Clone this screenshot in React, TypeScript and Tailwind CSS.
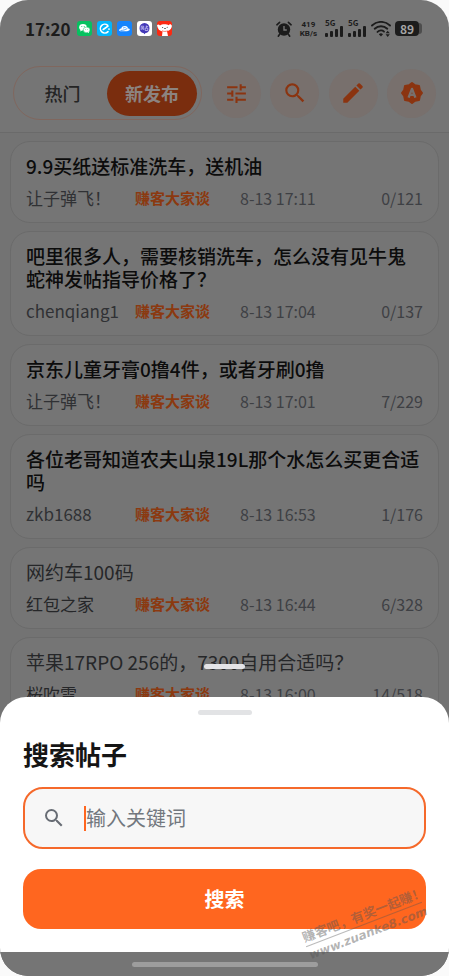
import { useState } from 'react';
import { MdTune, MdSearch, MdEdit } from 'react-icons/md';

type Post = {
  title: string;
  author: string;
  time: string;
  count: string;
  read?: boolean;
};

const posts: Post[] = [
  { title: '9.9买纸送标准洗车，送机油', author: '让子弹飞！', time: '8-13 17:11', count: '0/121' },
  { title: '吧里很多人，需要核销洗车，怎么没有见牛鬼蛇神发帖指导价格了？', author: 'chenqiang1', time: '8-13 17:04', count: '0/137' },
  { title: '京东儿童牙膏0撸4件，或者牙刷0撸', author: '让子弹飞！', time: '8-13 17:01', count: '7/229' },
  { title: '各位老哥知道农夫山泉19L那个水怎么买更合适吗', author: 'zkb1688', time: '8-13 16:53', count: '1/176' },
  { title: '网约车100码', author: '红包之家', time: '8-13 16:44', count: '6/328', read: true },
  { title: '苹果17RPO 256的，7300自用合适吗？', author: '桜吹雪', time: '8-13 16:00', count: '14/518', read: true },
];

function WechatIcon() {
  return (
    <svg viewBox="0 0 15 15" className="size-[15px]" aria-hidden="true">
      <rect width="15" height="15" rx="3" fill="#07c160" />
      <ellipse cx="6" cy="6.3" rx="3.8" ry="3.2" fill="#fff" />
      <path d="M3.6 8.4 3.2 10.4 5.4 9.2Z" fill="#fff" />
      <ellipse cx="9.6" cy="8.9" rx="3.4" ry="2.8" fill="#fff" stroke="#07c160" strokeWidth=".5" />
      <path d="M10.8 11 12 12.2 12 10.2Z" fill="#fff" />
      <g fill="#07c160">
        <circle cx="4.8" cy="5.5" r=".5" />
        <circle cx="7.2" cy="5.5" r=".5" />
        <circle cx="8.5" cy="8.3" r=".4" />
        <circle cx="10.6" cy="8.3" r=".4" />
      </g>
    </svg>
  );
}

function EleIcon() {
  return (
    <svg viewBox="0 0 15 15" className="size-[15px]" aria-hidden="true">
      <rect width="15" height="15" rx="3" fill="#02b6fd" />
      <path d="M10.7 4.3A4.4 4.4 0 1 0 11 10.6M6.2 8.5 11 5.2" fill="none" stroke="#fff" strokeWidth="1.6" strokeLinecap="round" />
      <circle cx="12" cy="8.1" r=".9" fill="#fff" />
    </svg>
  );
}

function CloudIcon() {
  return (
    <svg viewBox="0 0 15 15" className="size-[15px]" aria-hidden="true">
      <rect width="15" height="15" rx="3" fill="#1684fc" />
      <path d="M2 9.6C2.2 8 3.4 7.5 4.3 7.5 4.7 5.8 6.3 5 8 5.1c2 .1 2.9 1.2 3 2.4 1 0 1.8.4 1.8 1 0 1-2 1.8-4.400 1.800H3.300Z" fill="#fff" />
      <path d="M3.500 9.500C6 9.500 8.500 8.700 10.300 7.500M6 7.200C6.700 6.500 7.800 6.400 8.600 6.700" fill="none" stroke="#1684fc" strokeWidth=".7" />
    </svg>
  );
}

function TieIcon() {
  return (
    <svg viewBox="0 0 15 15" className="size-[15px]" aria-hidden="true">
      <rect width="15" height="15" rx="3" fill="#fff" />
      <path d="M7.500 2A5 5 0 0 1 12.500 7.200C12.500 10 10.500 11.800 8.500 12.100L7.500 13.200 6.500 12.100C4.500 11.800 2.500 10 2.500 7.200A5 5 0 0 1 7.500 2Z" fill="#4338b8" />
      <path d="M4.200 9V5.200H6.700V9M5.450 6V8.400M9.300 4.500V7M9.300 5.600H11.200M8.200 7.200H10.800V9.500H8.200Z" fill="none" stroke="#d9d4fa" strokeWidth=".7" />
    </svg>
  );
}

function JdIcon() {
  return (
    <svg viewBox="0 0 15 15" className="size-[15px]" aria-hidden="true">
      <rect width="15" height="15" rx="3" fill="#fb2a12" />
      <path d="M0 4.500C.5 3 2 3 3 4.500 4.500 3 9.500 2.800 11.700 4.200 12.500 2.800 14.500 3.200 14.900 5 14.500 7.500 13.300 8.700 12 9.500L10 10.300 11 15H5L5.500 10.500C2.500 10 .8 8 0 4.500Z" fill="#fff" />
      <path d="M5 9.700C6.700 10.700 9 10.700 10.700 9.700" fill="none" stroke="#fb2a12" strokeWidth=".6" />
      <circle cx="5.700" cy="6.500" r=".5" fill="#222" />
      <circle cx="10.200" cy="6.300" r=".5" fill="#222" />
      <ellipse cx="8" cy="7.600" rx=".8" ry=".5" fill="#222" />
    </svg>
  );
}

function AlarmIcon() {
  return (
    <svg viewBox="0 0 16 16" className="size-4" aria-hidden="true">
      <circle cx="8" cy="8.500" r="6.200" fill="#1c1c1c" />
      <path d="M.9 3.800 3.600 1.300M15.100 3.800 12.400 1.300M3.800 13 2.300 15.200M12.200 13 13.700 15.200" stroke="#1c1c1c" strokeWidth="1.600" strokeLinecap="round" />
      <path d="M8 5V9H10.800" fill="none" stroke="#757575" strokeWidth="1.400" />
    </svg>
  );
}

function Signal() {
  return (
    <div className="flex flex-col">
      <span className="text-[8px] leading-[6px] font-bold">5G</span>
      <svg viewBox="0 0 18 11" className="h-[11px] w-[18px]" aria-hidden="true">
        <g fill="#1c1c1c">
          <rect x="0" y="7" width="3" height="4" rx="1" />
          <rect x="5" y="5" width="3" height="6" rx="1" />
          <rect x="10" y="3" width="3" height="8" rx="1" />
          <rect x="15" y="0" width="3" height="11" rx="1" />
        </g>
      </svg>
    </div>
  );
}

function WifiIcon() {
  return (
    <svg viewBox="0 0 20 16" className="h-4 w-5" aria-hidden="true">
      <g fill="none" stroke="#1c1c1c" strokeWidth="1.900" strokeLinecap="round">
        <path d="M1 4.500C6-.3 14-.3 19 4.500" />
        <path d="M3.700 7.700C7.300 4.400 12.700 4.400 16.300 7.700" />
        <path d="M6.500 10.900C8.600 9.100 11.400 9.100 13 10.600" />
      </g>
      <path d="M7.800 13.200Q10 11.400 12 13.200L10 15.500Z" fill="#1c1c1c" />
      <path d="M14.600 12.300 16.700 9.700 18.800 12.300ZM14.600 13.300 16.700 15.900 18.800 13.300Z" fill="#1c1c1c" />
    </svg>
  );
}

function BadgeAIcon() {
  return (
    <svg viewBox="0 0 24 24" className="size-6" aria-hidden="true">
      <path
        d="M12 2 15 4.200 19 5 19.800 9 22 12 19.800 15 19 19 15 19.800 12 22 9 19.800 5 19 4.200 15 2 12 4.200 9 5 5 9 4.200Z"
        fill="#8b3410"
        stroke="#8b3410"
        strokeWidth="2"
        strokeLinejoin="round"
      />
      <path d="M8.600 16.600 12 7.900 15.400 16.600M9.900 13.900H14.100" fill="none" stroke="#78706d" strokeWidth="2.400" strokeLinejoin="round" />
    </svg>
  );
}

function StatusBar() {
  return (
    <div className="flex h-[57px] items-center pr-[27px] pl-[25px] text-[#1c1c1c]">
      <span className="text-[17px] leading-none font-semibold">17:20</span>
      <div className="ml-[6px] flex gap-[5px]">
        <WechatIcon />
        <EleIcon />
        <CloudIcon />
        <TieIcon />
        <JdIcon />
      </div>
      <div className="ml-auto flex items-center">
        <AlarmIcon />
        <div className="ml-2 text-center font-[Roboto,sans-serif] text-[8px] leading-[9px] font-bold">
          <div>419</div>
          <div>KB/s</div>
        </div>
        <div className="ml-2 flex gap-[5px]">
          <Signal />
          <Signal />
        </div>
        <div className="ml-[5px]">
          <WifiIcon />
        </div>
        <div className="ml-1 flex items-center">
          <span className="flex h-[15px] w-6 items-center justify-center rounded-[4px] bg-[#1c1c1c] text-xs font-bold text-[#a5a5a5]">89</span>
          <span className="h-[11px] w-[3px] rounded-r bg-[#4d4d4d]" />
        </div>
      </div>
    </div>
  );
}

const roundButton = 'flex size-[49px] items-center justify-center rounded-full bg-[#78706d] text-[#8b3410]';

function Toolbar() {
  return (
    <header className="flex items-center justify-between border-b border-[#6a6a6a] pt-[9px] pr-[13px] pb-3 pl-[13px]">
      <div className="flex h-[54px] w-[189px] items-center rounded-full border border-[#80675e] pr-1">
        <button className="flex-1 pl-1 text-lg font-medium text-[#242424]">热门</button>
        <button className="h-[45px] w-[90px] rounded-full bg-[#7a2d0e] text-lg font-semibold text-[#8c8380]">新发布</button>
      </div>
      <button className={roundButton} aria-label="筛选"><MdTune size={25} /></button>
      <button className={roundButton} aria-label="搜索"><MdSearch size={26} /></button>
      <button className={roundButton} aria-label="发帖"><MdEdit size={26} /></button>
      <button className={roundButton} aria-label="自动"><BadgeAIcon /></button>
    </header>
  );
}

function PostCard({ post }: { post: Post }) {
  return (
    <li className="rounded-[20px] border border-[#6b6b6b] bg-[#757575] px-[15px] pt-3 pb-[13px]">
      <h2 className={post.read ? 'text-[19px] leading-[23px] text-[#262729]' : 'text-[19px] leading-[23px] font-medium text-[#0c0c0c]'}>
        {post.title}
      </h2>
      <div className="mt-[10px] flex h-[22px] items-center whitespace-nowrap">
        <span className={post.read ? 'w-[109px] text-[17px] text-[#262729]' : 'w-[109px] text-[17px] text-[#303134]'}>{post.author}</span>
        <span className="w-[105px] text-[15px] font-semibold text-[#8b3910]">赚客大家谈</span>
        <span className="text-base text-[#3e4044]">{post.time}</span>
        <span className="ml-auto text-base text-[#3e4044]">{post.count}</span>
      </div>
    </li>
  );
}

function SearchSheet() {
  const [keyword, setKeyword] = useState('');
  return (
    <form
      className="rounded-t-[26px] bg-white px-[23px] pt-[13px] pb-[23px]"
      onSubmit={(event) => event.preventDefault()}
    >
      <div className="mx-auto h-[5px] w-[54px] rounded-full bg-[#e2e3e5]" />
      <h1 className="mt-[23px] text-[26px] leading-8 font-bold text-[#151515]">
        <label htmlFor="keyword">搜索帖子</label>
      </h1>
      <div className="mt-[17px] flex h-[62px] items-center rounded-[20px] border-2 border-[#f5692b] bg-[#f7f7f7] px-[17px]">
        <MdSearch size={24} className="shrink-0 text-[#686d75]" />
        <div className="ml-[18px] flex flex-1 items-center border-l-2 border-[#ff661f]">
          <input
            id="keyword"
            value={keyword}
            onChange={(event) => setKeyword(event.target.value)}
            placeholder="输入关键词"
            className="h-[25px] min-w-0 flex-1 bg-transparent text-[20px] text-[#222] caret-[#ff661f] outline-none placeholder:text-[#72777e]"
          />
        </div>
      </div>
      <button type="submit" className="mt-5 h-[60px] w-full rounded-[18px] bg-[#ff661f] text-[20px] font-bold text-white">
        搜索
      </button>
    </form>
  );
}

export default function App() {
  return (
    <div className="h-dvh bg-[#fafafa] font-['Noto_Sans_CJK_SC',sans-serif]">
      <div className="relative h-full overflow-hidden rounded-[28px] bg-[#757575]">
        <StatusBar />
        <Toolbar />
        <ul className="flex flex-col gap-2 bg-[#737373] px-[10px] pt-2">
          {posts.map((post) => (
            <PostCard key={post.title} post={post} />
          ))}
        </ul>
        <div className="absolute inset-x-0 bottom-0">
          <div className="mx-auto mb-7 h-[5px] w-[41px] rounded-full bg-[#e4e4e7]" />
          <SearchSheet />
          <div className="flex h-6 items-center justify-center bg-[#757575]">
            <div className="h-[5px] w-[186px] rounded-full bg-[#9d9d9d]" />
          </div>
        </div>
        <div className="pointer-events-none absolute right-[23px] bottom-[33px] w-[124px] -rotate-[21deg] font-bold whitespace-nowrap text-[#555]/45">
          <div className="border-b border-[#555]/40 text-[13px] leading-[18px]">赚客吧，有奖一起赚！</div>
          <div className="font-['DejaVu_Sans',sans-serif] text-[12px] leading-[18px] italic">www.zuanke8.com</div>
        </div>
      </div>
    </div>
  );
}
